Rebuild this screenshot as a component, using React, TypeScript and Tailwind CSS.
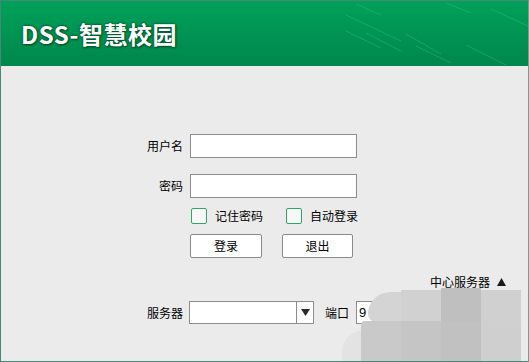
import React from "react";

const font = { fontFamily: '"Noto Sans CJK SC", "Noto Sans", sans-serif' };

function Checkbox({ label }: { label: string }) {
  return (
    <div className="flex items-center">
      <div className="w-[16px] h-[16px] border border-[#2ea56c] rounded-[2px] bg-[#f7f7f7]" />
      <span className="ml-[8px] text-[12px] leading-[16px] text-black">{label}</span>
    </div>
  );
}

export default function App() {
  return (
    <div
      className="w-[529px] h-[362px] bg-[#ebebeb] border border-[#4a8777] border-r-[#6aa393] overflow-hidden relative flex flex-col"
      style={font}
    >
      {/* header */}
      <div className="relative h-[65px] shrink-0 bg-gradient-to-b from-[#00a15b] to-[#00874b] flex items-center pl-[20px]">
        <svg className="absolute inset-0" width="527" height="65" viewBox="0 0 527 65">
          <g stroke="#3fce8a" strokeWidth="1" opacity="0.35">
            <line x1="355" y1="3" x2="380" y2="14" />
            <line x1="345" y1="14" x2="400" y2="40" />
            <line x1="365" y1="32" x2="400" y2="50" />
            <line x1="345" y1="30" x2="380" y2="47" />
            <line x1="405" y1="33" x2="440" y2="53" />
            <line x1="415" y1="45" x2="450" y2="62" />
            <line x1="445" y1="2" x2="470" y2="12" />
            <line x1="465" y1="44" x2="505" y2="64" />
            <line x1="490" y1="8" x2="527" y2="25" />
          </g>
        </svg>
        <span
          className="relative text-white font-bold text-[24px] leading-none tracking-[0.5px]"
          style={{
            textShadow:
              "0 0 2px #005a2e, 0 0 3px #005a2e, 1px 1px 2px #004d26",
          }}
        >
          DSS-智慧校园
        </span>
      </div>

      {/* content */}
      <div className="flex flex-col text-[12px] text-black">
        <div className="flex items-center mt-[68px]">
          <div className="w-[182px] text-right leading-[24px]">用户名</div>
          <div className="ml-[7px] w-[167px] h-[24px] bg-white border border-[#8c8c8c]" />
        </div>
        <div className="flex items-center mt-[16px]">
          <div className="w-[182px] text-right leading-[24px]">密码</div>
          <div className="ml-[7px] w-[167px] h-[24px] bg-white border border-[#8c8c8c]" />
        </div>
        <div className="flex items-center mt-[10px] pl-[190px]">
          <Checkbox label="记住密码" />
          <div className="ml-[23px]">
            <Checkbox label="自动登录" />
          </div>
        </div>
        <div className="flex items-center mt-[10px] pl-[189px]">
          <div className="w-[72px] h-[24px] bg-white border border-[#8a8a8a] rounded-[2px] flex items-center justify-center">
            登录
          </div>
          <div className="ml-[20px] w-[71px] h-[24px] bg-white border border-[#8a8a8a] rounded-[2px] flex items-center justify-center">
            退出
          </div>
        </div>
        <div className="flex items-center justify-end mt-[16px] pr-[22px] h-[16px]">
          <span>中心服务器</span>
          <svg className="ml-[7px]" width="9" height="8" viewBox="0 0 9 8">
            <polygon points="4.5,0 9,8 0,8" fill="#1a1a1a" />
          </svg>
        </div>
        <div className="flex items-center mt-[11px]">
          <div className="w-[182px] text-right leading-[23px]">服务器</div>
          <div className="ml-[6px] w-[125px] h-[23px] bg-white border border-[#8c8c8c] flex">
            <div className="flex-1" />
            <div className="w-[17px] border-l border-[#8c8c8c] flex items-center justify-center">
              <svg width="9" height="7" viewBox="0 0 9 7">
                <polygon points="0,0 9,0 4.5,7" fill="#2a2a2a" />
              </svg>
            </div>
          </div>
          <div className="ml-[11px] leading-[23px]">端口</div>
          <div className="ml-[7px] w-[100px] h-[23px] bg-white border border-[#8c8c8c] flex items-center pl-[2px] text-[13px]" style={{ fontFamily: '"Liberation Sans", sans-serif' }}>
            9
          </div>
        </div>
      </div>

      {/* mosaic privacy overlay */}
      <div className="absolute left-[339px] top-[289px] w-[181px] h-[73px]">
        {/* light soft blob, bottom-left */}
        <div className="absolute left-[2px] top-[40px] w-[44px] h-[50px] rounded-[22px] bg-[#e3e3e3]" />
        {/* top row */}
        <div className="absolute left-[28px] top-[2px] w-[33px] h-[30px] rounded-tl-[22px] rounded-bl-[8px] bg-[#d4d4d4]" />
        <div className="absolute left-[61px] top-[0px] w-[40px] h-[31px] bg-[#d1d1d1]" />
        <div className="absolute left-[101px] top-[-2px] w-[40px] h-[33px] bg-[#bfbfbf]" />
        <div className="absolute left-[141px] top-[0px] w-[40px] h-[31px] bg-[#d0d0d0]" />
        {/* bottom row */}
        <div className="absolute left-[21px] top-[31px] w-[160px] h-[42px] grid grid-cols-4">
          <div className="bg-[#c9c9c9] rounded-tl-[4px]" />
          <div className="bg-[#c5c5c5]" />
          <div className="bg-[#c1c1c1]" />
          <div className="bg-[#cfcfcf]" />
        </div>
      </div>
    </div>
  );
}
